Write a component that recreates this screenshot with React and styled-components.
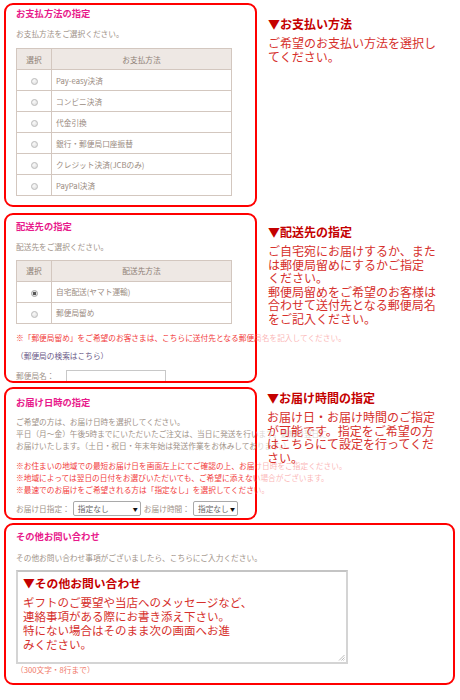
import React from "react";
import styled, { createGlobalStyle, css } from "styled-components";

const GlobalStyle = createGlobalStyle`
  html, body {
    margin: 0;
    padding: 0;
    background: #fff;
  }
  body {
    font-family: "Noto Sans CJK JP", "Noto Sans", sans-serif;
  }
`;

const Page = styled.div`
  width: 460px;
  height: 700px;
  padding: 0 5px 0 4px;
  box-sizing: border-box;
  overflow: hidden;
`;

const Row = styled.section`
  display: flex;
  margin-top: ${(p) => p.$gap}px;
`;

const Box = styled.div`
  flex: none;
  width: ${(p) => p.$w}px;
  height: ${(p) => p.$h}px;
  box-sizing: border-box;
  border: 2px solid #ff0000;
  border-radius: 9px;
  padding: ${(p) => p.$top}px 10px 0;
  background: #fff;
`;

const Title = styled.h2`
  margin: 0;
  font-size: 9.3px;
  line-height: 12px;
  font-weight: bold;
  color: #e8198b;
`;

const Lead = styled.p`
  margin: ${(p) => p.$mt}px 0 0;
  font-size: 7.7px;
  line-height: 12px;
  color: #a09288;
  white-space: nowrap;
`;

const Alert = styled.p`
  margin: ${(p) => p.$mt}px 0 0;
  font-size: 7.7px;
  line-height: 12px;
  color: #f23c3c;
  white-space: nowrap;
`;

const SearchLink = styled.a`
  display: block;
  margin-top: 6.5px;
  font-size: 7.7px;
  line-height: 12px;
  color: #6b5a87;
  text-decoration: none;
`;

const Table = styled.table`
  width: 216px;
  margin-top: ${(p) => p.$mt}px;
  border-collapse: collapse;
  font-size: 7.7px;
  color: #9a8b81;

  th,
  td {
    height: 21px;
    padding: 0;
    border: 1px solid #d3c7bf;
    box-sizing: border-box;
  }
  th {
    background: #eee8e4;
    font-weight: normal;
    color: #8d7e75;
  }
  th:first-child,
  td:first-child {
    width: 35px;
    text-align: center;
  }
  td + td {
    padding-left: 4px;
  }
`;

const Radio = styled.span`
  display: inline-block;
  width: 7px;
  height: 7px;
  box-sizing: border-box;
  border: 1px solid #bdbdbd;
  border-radius: 50%;
  vertical-align: middle;
  background: radial-gradient(circle at 40% 35%, #fafafa, #d9d9d9);
  ${(p) =>
    p.$checked &&
    css`
      border-color: #a8a8a8;
      background: radial-gradient(circle, #555 0 1.4px, #e2e2e2 1.9px);
    `}
`;

const FieldRow = styled.div`
  display: flex;
  align-items: center;
  gap: 3px;
  margin-top: ${(p) => p.$mt}px;
  font-size: 7.7px;
  color: #a09288;
  white-space: nowrap;
`;

const TextInput = styled.span`
  display: block;
  width: 100px;
  height: 11px;
  margin-left: 9px;
  box-sizing: border-box;
  border: 1px solid #c8c8c8;
  border-bottom: none;
  background: #fff;
`;

const Select = styled.span`
  display: flex;
  align-items: center;
  justify-content: space-between;
  width: ${(p) => p.$w}px;
  height: 15px;
  box-sizing: border-box;
  padding: 0 2px 0 4px;
  border: 1px solid #a9a9a9;
  border-radius: 2px;
  background: #fff;
  color: #666;

  &::after {
    content: "▼";
    font-size: 5px;
    color: #111;
  }
`;

const Note = styled.aside`
  position: relative;
  z-index: 1;
  flex: 1;
  padding: ${(p) => p.$top}px 0 0 ${(p) => p.$left}px;
  background: rgba(255, 255, 255, 0.62);
  font-size: 12px;
  line-height: 13.5px;
  color: #d6302c;
`;

const NoteTitle = styled.div`
  margin-bottom: 5px;
  font-size: ${(p) => p.$size || 12}px;
  line-height: 14px;
  font-weight: bold;
  color: #c40000;
`;

const Memo = styled.div`
  position: relative;
  width: 332px;
  height: 94px;
  margin-top: 6px;
  box-sizing: border-box;
  padding: 4px 5px 0;
  border: 2px solid #d4d4d4;
  border-top-color: #c4c4c4;
  font-size: 11.5px;
  line-height: 14px;
  color: #d6302c;
`;

const Grip = styled.svg`
  position: absolute;
  right: 1px;
  bottom: 1px;
`;

const Limit = styled.p`
  margin: 0.5px 0 0;
  font-size: 7.7px;
  line-height: 11px;
  color: #f07a6a;
`;

const payments = [
  "Pay-easy決済",
  "コンビニ決済",
  "代金引換",
  "銀行・郵便局口座振替",
  "クレジット決済(JCBのみ)",
  "PayPal決済",
];

const deliveries = [
  { label: "自宅配送(ヤマト運輸)", checked: true },
  { label: "郵便局留め", checked: false },
];

function ChoiceTable({ head, rows, mt }) {
  return (
    <Table $mt={mt}>
      <thead>
        <tr>
          <th>選択</th>
          <th>{head}</th>
        </tr>
      </thead>
      <tbody>
        {rows.map((r) => (
          <tr key={r.label}>
            <td>
              <Radio $checked={r.checked} />
            </td>
            <td>{r.label}</td>
          </tr>
        ))}
      </tbody>
    </Table>
  );
}

export default function App() {
  return (
    <Page>
      <GlobalStyle />

      <Row $gap={3}>
        <Box $w={253} $h={204} $top={2}>
          <Title>お支払方法の指定</Title>
          <Lead $mt={9}>お支払方法をご選択ください。</Lead>
          <ChoiceTable
            head="お支払方法"
            mt={8}
            rows={payments.map((label) => ({ label }))}
          />
        </Box>
        <Note $top={14} $left={11}>
          <NoteTitle>▼お支払い方法</NoteTitle>
          ご希望のお支払い方法を選択し
          <br />
          てください。
        </Note>
      </Row>

      <Row $gap={6}>
        <Box $w={253} $h={170} $top={5}>
          <Title>配送先の指定</Title>
          <Lead $mt={8.7}>配送先をご選択ください。</Lead>
          <ChoiceTable head="配送先方法" mt={7.3} rows={deliveries} />
          <Alert $mt={7.7}>
            ※「郵便局留め」をご希望のお客さまは、こちらに送付先となる郵便局名を記入してください。
          </Alert>
          <SearchLink href="#">（郵便局の検索はこちら）</SearchLink>
          <FieldRow $mt={7.7}>
            郵便局名：
            <TextInput />
          </FieldRow>
        </Box>
        <Note $top={12} $left={11}>
          <NoteTitle>▼配送先の指定</NoteTitle>
          ご自宅宛にお届けするか、また
          <br />
          は郵便局留めにするかご指定
          <br />
          ください。
          <br />
          郵便局留めをご希望のお客様は
          <br />
          合わせて送付先となる郵便局名
          <br />
          をご記入ください。
        </Note>
      </Row>

      <Row $gap={4}>
        <Box $w={253} $h={133} $top={7}>
          <Title>お届け日時の指定</Title>
          <Lead $mt={8}>
            ご希望の方は、お届け日時を選択してください。
            <br />
            平日（月〜金）午後5時までにいただいたご注文は、当日に発送を行います。最短で翌日に
            <br />
            お届けいたします。（土日・祝日・年末年始は発送作業をお休みしております。）
          </Lead>
          <Alert $mt={8}>
            ※お住まいの地域での最短お届け日を画面左上にてご確認の上、お届け日時をご指定ください。
            <br />
            ※地域によっては翌日の日付をお選びいただいても、ご希望に添えない場合がございます。
            <br />
            ※最速でのお届けをご希望される方は「指定なし」を選択してください。
          </Alert>
          <FieldRow $mt={4.5}>
            お届け日指定：
            <Select $w={68}>指定なし</Select>
            お届け時間：
            <Select $w={45}>指定なし</Select>
          </FieldRow>
        </Box>
        <Note $top={4} $left={10}>
          <NoteTitle>▼お届け時間の指定</NoteTitle>
          お届け日・お届け時間のご指定
          <br />
          が可能です。指定をご希望の方
          <br />
          はこちらにて設定を行ってくだ
          <br />
          さい。
        </Note>
      </Row>

      <Row $gap={3}>
        <Box $w={451} $h={162} $top={5}>
          <Title>その他お問い合わせ</Title>
          <Lead $mt={9.5}>
            その他お問い合わせ事項がございましたら、こちらにご入力ください。
          </Lead>
          <Memo>
            <NoteTitle $size={11.8}>▼その他お問い合わせ</NoteTitle>
            ギフトのご要望や当店へのメッセージなど、
            <br />
            連絡事項がある際にお書き添え下さい。
            <br />
            特にない場合はそのまま次の画面へお進
            <br />
            みください。
            <Grip width="7" height="7" viewBox="0 0 7 7">
              <path d="M6.5 1 L1 6.5 M6.5 3.5 L3.5 6.5 M6.5 5.5 L5.5 6.5" stroke="#aaa" strokeWidth="0.8" />
            </Grip>
          </Memo>
          <Limit>（300文字・8行まで）</Limit>
        </Box>
      </Row>
    </Page>
  );
}
